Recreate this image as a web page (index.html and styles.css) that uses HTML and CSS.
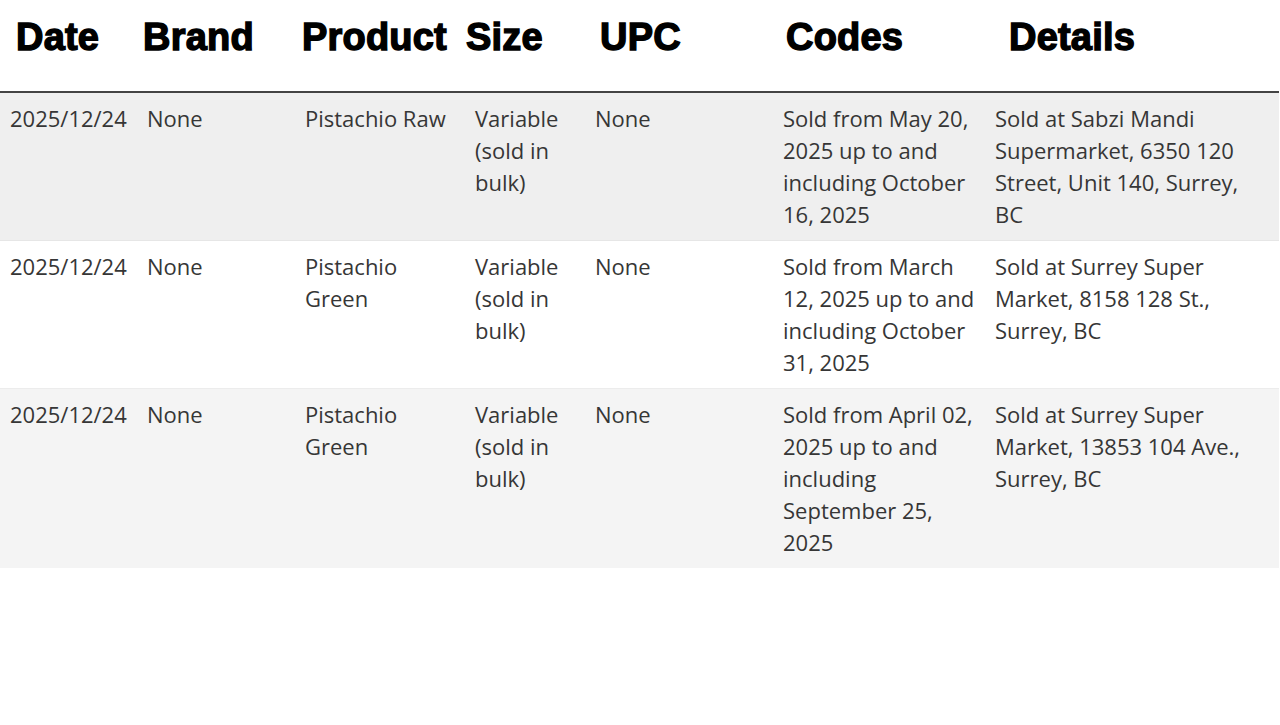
FILE: index.html
```html
<!DOCTYPE html>
<html lang="en">
<head>
<meta charset="utf-8">
<title>Recall table</title>
<link rel="stylesheet" href="styles.css">
</head>
<body>
<div class="sheet">
  <div class="head">
    <span class="h h-date">Date</span>
    <span class="h h-brand">Brand</span>
    <span class="h h-product">Product</span>
    <span class="h h-size">Size</span>
    <span class="h h-upc">UPC</span>
    <span class="h h-codes">Codes</span>
    <span class="h h-details">Details</span>
  </div>
  <table class="grid">
    <colgroup>
      <col class="c-date"><col class="c-brand"><col class="c-product"><col class="c-size"><col class="c-upc"><col class="c-codes"><col class="c-details">
    </colgroup>
    <tbody>
      <tr class="r1">
        <td>2025/12/24</td>
        <td>None</td>
        <td>Pistachio Raw</td>
        <td>Variable (sold in bulk)</td>
        <td>None</td>
        <td>Sold from May 20, 2025 up to and including October 16, 2025</td>
        <td>Sold at Sabzi Mandi Supermarket, 6350 120 Street, Unit 140, Surrey, BC</td>
      </tr>
      <tr class="r2">
        <td>2025/12/24</td>
        <td>None</td>
        <td>Pistachio Green</td>
        <td>Variable (sold in bulk)</td>
        <td>None</td>
        <td>Sold from March 12, 2025 up to and including October 31, 2025</td>
        <td>Sold at Surrey Super Market, 8158 128 St., Surrey, BC</td>
      </tr>
      <tr class="r3">
        <td>2025/12/24</td>
        <td>None</td>
        <td>Pistachio Green</td>
        <td>Variable (sold in bulk)</td>
        <td>None</td>
        <td>Sold from April 02, 2025 up to and including September 25, 2025</td>
        <td>Sold at Surrey Super Market, 13853 104 Ave., Surrey, BC</td>
      </tr>
    </tbody>
  </table>
</div>
</body>
</html>
```

FILE: styles.css
```css
html, body {
  margin: 0;
  padding: 0;
  background: #ffffff;
}

.sheet {
  width: 1279px;
}

.head {
  display: flex;
  align-items: flex-start;
  height: 91px;
  border-bottom: 2px solid #444444;
  box-sizing: content-box;
}

.h {
  display: block;
  font-family: "Liberation Sans", Arial, sans-serif;
  font-weight: 700;
  font-size: 38px;
  line-height: 44px;
  color: #000000;
  -webkit-text-stroke: 1.4px #000000;
  letter-spacing: 0.2px;
  padding-top: 15px;
}

.h-date { margin-left: 16px; width: 127px; }
.h-brand { width: 159px; }
.h-product { width: 164px; }
.h-size { width: 134px; }
.h-upc { width: 186px; }
.h-codes { width: 223px; }
.h-details { flex: 1; }

.grid {
  width: 1279px;
  border-collapse: collapse;
  table-layout: fixed;
  font-family: "Open Sans", "Noto Sans", sans-serif;
  font-size: 22px;
  line-height: 32px;
  color: #363636;
}

.c-date { width: 137px; }
.c-brand { width: 158px; }
.c-product { width: 170px; }
.c-size { width: 120px; }
.c-upc { width: 188px; }
.c-codes { width: 212px; }
.c-details { width: 294px; }

.grid td {
  vertical-align: top;
  padding: 9px 10px 10px 10px;
}

.r1 { background: #efefef; border-bottom: 1px solid #e6e6e6; }
.r2 { background: #ffffff; border-bottom: 1px solid #ececec; }
.r3 { background: #f4f4f4; }
.r3 td { padding-bottom: 10px; }
```
